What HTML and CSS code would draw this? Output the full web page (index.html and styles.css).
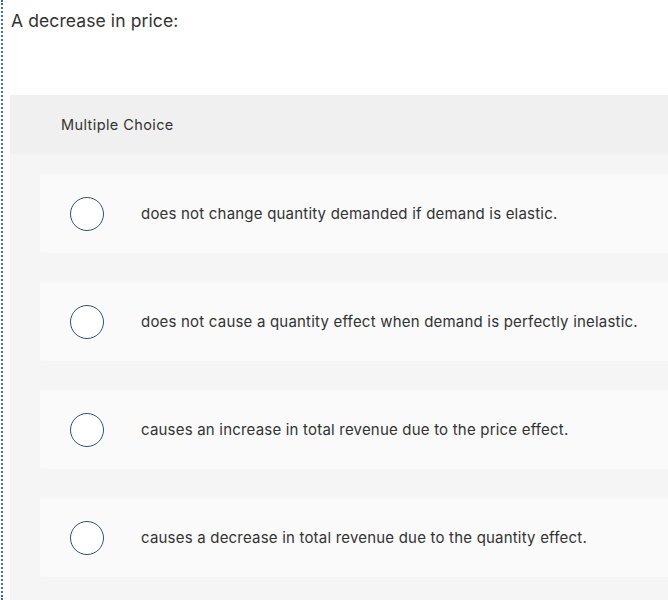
FILE: index.html
```html
<!DOCTYPE html>
<html>
<head>
<meta charset="utf-8">
<link rel="stylesheet" href="styles.css">
</head>
<body>
<div class="page">
  <div class="question">A decrease in price:</div>
  <div class="panel">
    <div class="panel-head">Multiple Choice</div>
    <div class="choices">
      <div class="choice"><span class="radio"></span><span class="label">does not change quantity demanded if demand is elastic.</span></div>
      <div class="choice"><span class="radio"></span><span class="label">does not cause a quantity effect when demand is perfectly inelastic.</span></div>
      <div class="choice"><span class="radio"></span><span class="label">causes an increase in total revenue due to the price effect.</span></div>
      <div class="choice"><span class="radio"></span><span class="label">causes a decrease in total revenue due to the quantity effect.</span></div>
    </div>
  </div>
</div>
</body>
</html>
```
FILE: styles.css
```css
html, body {
  margin: 0;
  padding: 0;
  background: #fff;
  overflow: hidden;
}
body {
  font-family: "Inter", "Liberation Sans", sans-serif;
  color: #333;
}
.page {
  margin-left: 1px;
  border-left: 2px dotted #3d6ea8;
  height: 600px;
  padding-left: 7px;
  width: 700px;
  box-sizing: border-box;
  overflow: hidden;
}
.question {
  padding-top: 10px;
  padding-left: 1px;
  font-size: 17.5px;
  letter-spacing: 0.1px;
  line-height: 22px;
  color: #333;
}
.panel {
  margin-top: 63px;
  background: #f5f5f5;
  height: 505px;
}
.panel-head {
  background: #f0f0f0;
  height: 59px;
  display: flex;
  align-items: center;
  padding-left: 51px;
  font-size: 14.5px;
  letter-spacing: 0.4px;
  color: #333;
}
.choices {
  padding-top: 20px;
  padding-left: 30px;
  display: flex;
  flex-direction: column;
  gap: 29px;
}
.choice {
  background: #fafafa;
  height: 79px;
  display: flex;
  align-items: center;
  border-radius: 2px;
}
.radio {
  width: 32px;
  height: 32px;
  border: 1px solid #3a5068;
  border-radius: 50%;
  background: #fff;
  margin-left: 30px;
  flex: none;
}
.label {
  margin-left: 37px;
  font-size: 15px;
  letter-spacing: 0.2px;
  color: #333;
}
```
